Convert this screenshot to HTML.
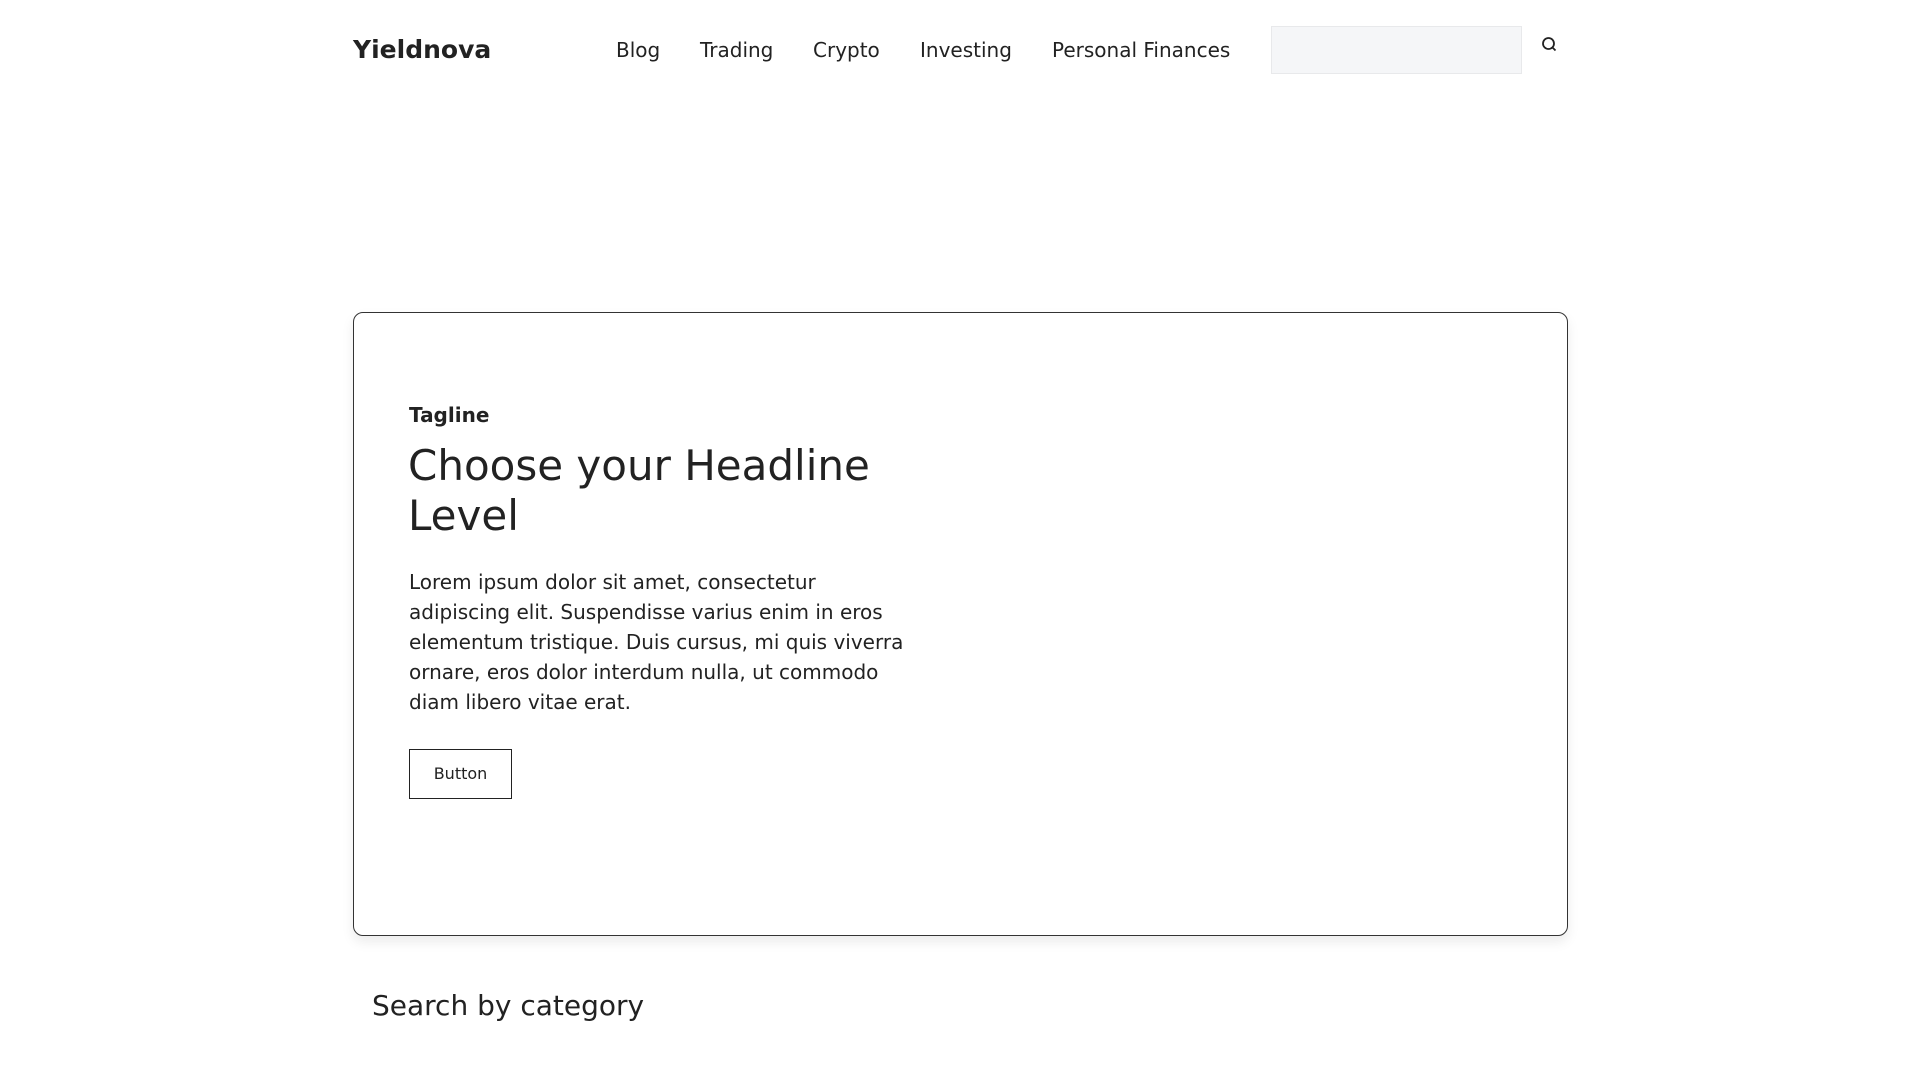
<!DOCTYPE html>
<html><head><meta charset="utf-8"><style>
*{margin:0;padding:0;box-sizing:border-box}
body{width:1920px;height:1080px;overflow:hidden;background:#fff;font-family:"DejaVu Sans","Liberation Sans",sans-serif;color:#222;position:relative}
.a{position:absolute;white-space:nowrap}
.logo{left:353px;top:34px;font-size:25px;font-weight:bold;line-height:32px}
.nav{top:37px;font-size:20px;line-height:26px}
.sbox{left:1271px;top:26px;width:251px;height:48px;background:#f5f6f8;border:1px solid #e8e9eb}
.card{left:353px;top:312px;width:1215px;height:624px;border:1px solid #333;border-radius:10px;box-shadow:0 6px 12px rgba(0,0,0,0.08)}
.tag{left:409px;top:403px;font-size:20px;font-weight:bold;line-height:24px}
.h{left:408px;top:441px;font-size:42px;line-height:50px;white-space:normal;width:520px}
.p{left:409px;top:567px;font-size:20px;line-height:30px;white-space:normal;width:510px}
.btn{left:409px;top:749px;width:103px;height:50px;border:1px solid #222;font-size:16px;text-align:center;line-height:48px}
.s{left:372px;top:988px;font-size:28px;line-height:36px}
</style></head><body>
<div class="a logo">Yieldnova</div>
<div class="a nav" style="left:616px">Blog</div>
<div class="a nav" style="left:700px">Trading</div>
<div class="a nav" style="left:813px">Crypto</div>
<div class="a nav" style="left:920px">Investing</div>
<div class="a nav" style="left:1052px">Personal Finances</div>
<div class="a sbox"></div>
<svg class="a" style="left:1541px;top:36px" width="17" height="17" viewBox="0 0 17 17"><circle cx="7.5" cy="7.5" r="5.5" fill="none" stroke="#222" stroke-width="1.8"/><line x1="11.5" y1="11.5" x2="14.5" y2="14.5" stroke="#222" stroke-width="1.8"/></svg>
<div class="a card"></div>
<div class="a tag">Tagline</div>
<div class="a h">Choose your Headline Level</div>
<div class="a p">Lorem ipsum dolor sit amet, consectetur adipiscing elit. Suspendisse varius enim in eros elementum tristique. Duis cursus, mi quis viverra ornare, eros dolor interdum nulla, ut commodo diam libero vitae erat.</div>
<div class="a btn">Button</div>
<div class="a s">Search by category</div>
</body></html>
